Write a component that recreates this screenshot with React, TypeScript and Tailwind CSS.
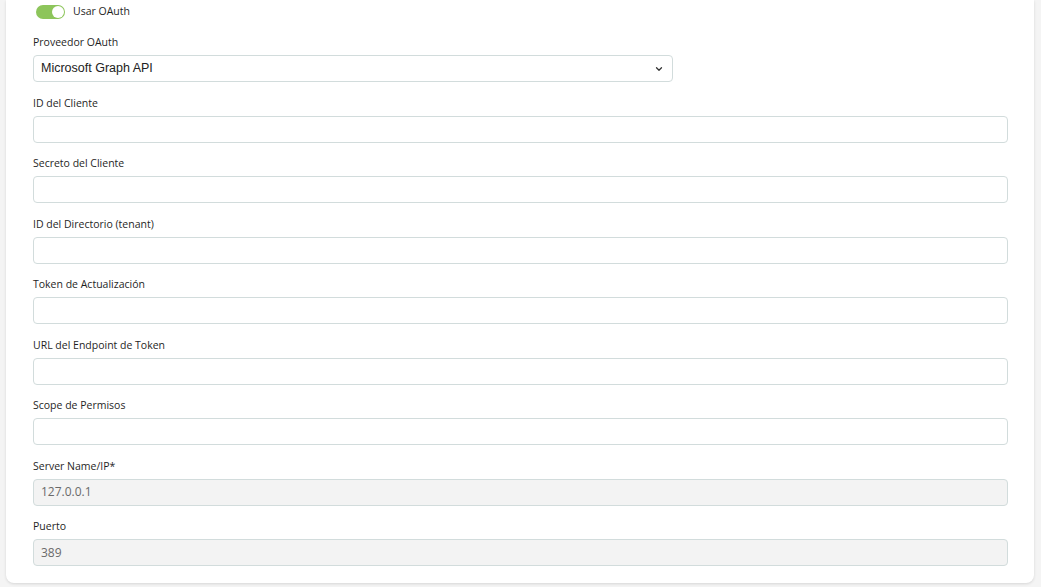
import { ChevronDown } from 'lucide-react';

const fields = [
  { label: 'ID del Cliente', value: '' },
  { label: 'Secreto del Cliente', value: '' },
  { label: 'ID del Directorio (tenant)', value: '' },
  { label: 'Token de Actualización', value: '' },
  { label: 'URL del Endpoint de Token', value: '' },
  { label: 'Scope de Permisos', value: '' },
  { label: 'Server Name/IP*', value: '127.0.0.1', disabled: true },
  { label: 'Puerto', value: '389', disabled: true },
];

function Field({ label, value, disabled }: { label: string; value: string; disabled?: boolean }) {
  return (
    <div className="flex flex-col gap-[6px]">
      <label className="text-[10.5px] leading-[13px] text-[#1f1f1f]">{label}</label>
      <div
        className={
          disabled
            ? 'h-[27px] rounded-[4px] border border-[#d2dcdc] bg-[#f3f3f3] px-[7px] flex items-center text-[12px] text-[#6a6a6a]'
            : 'h-[27px] rounded-[4px] border border-[#d2dcdc] bg-white px-[7px] flex items-center text-[12px] text-[#333]'
        }
      >
        {value}
      </div>
    </div>
  );
}

export default function App() {
  return (
    <div
      className="min-h-[587px] bg-[#f4f4f4] pl-[6px] pr-[7px] pb-[5px]"
      style={{ fontFamily: '"Open Sans", "Liberation Sans", sans-serif' }}
    >
      <div className="bg-white rounded-b-[8px] shadow-[0_1px_3px_rgba(0,0,0,0.12)] pl-[27px] pr-[26px] pt-[5px] pb-[17px]">
        {/* Toggle */}
        <div className="flex items-center gap-[8px] h-[14px] pl-[3px]">
          <div className="relative w-[29px] h-[14px] rounded-full bg-[#8dc55b]">
            <div className="absolute right-[1px] top-[1px] w-[12px] h-[12px] rounded-full bg-white" />
          </div>
          <span className="text-[10.5px] text-[#1f1f1f]">Usar OAuth</span>
        </div>

        <div className="mt-[17px] flex flex-col gap-[14.5px]">
          {/* Provider select */}
          <div className="flex flex-col gap-[6px]">
            <label className="text-[10.5px] leading-[13px] text-[#1f1f1f]">Proveedor OAuth</label>
            <div className="w-[640px] h-[27px] rounded-[4px] border border-[#d2dcdc] bg-white pl-[7px] pr-[8px] flex items-center justify-between">
              <span
                className="text-[12.5px] text-[#222]"
                style={{ fontFamily: '"Liberation Sans", Arial, sans-serif' }}
              >
                Microsoft Graph API
              </span>
              <ChevronDown className="w-[10px] h-[10px] text-[#333]" strokeWidth={3} />
            </div>
          </div>

          {fields.map((f) => (
            <Field key={f.label} label={f.label} value={f.value} disabled={f.disabled} />
          ))}
        </div>
      </div>
    </div>
  );
}
